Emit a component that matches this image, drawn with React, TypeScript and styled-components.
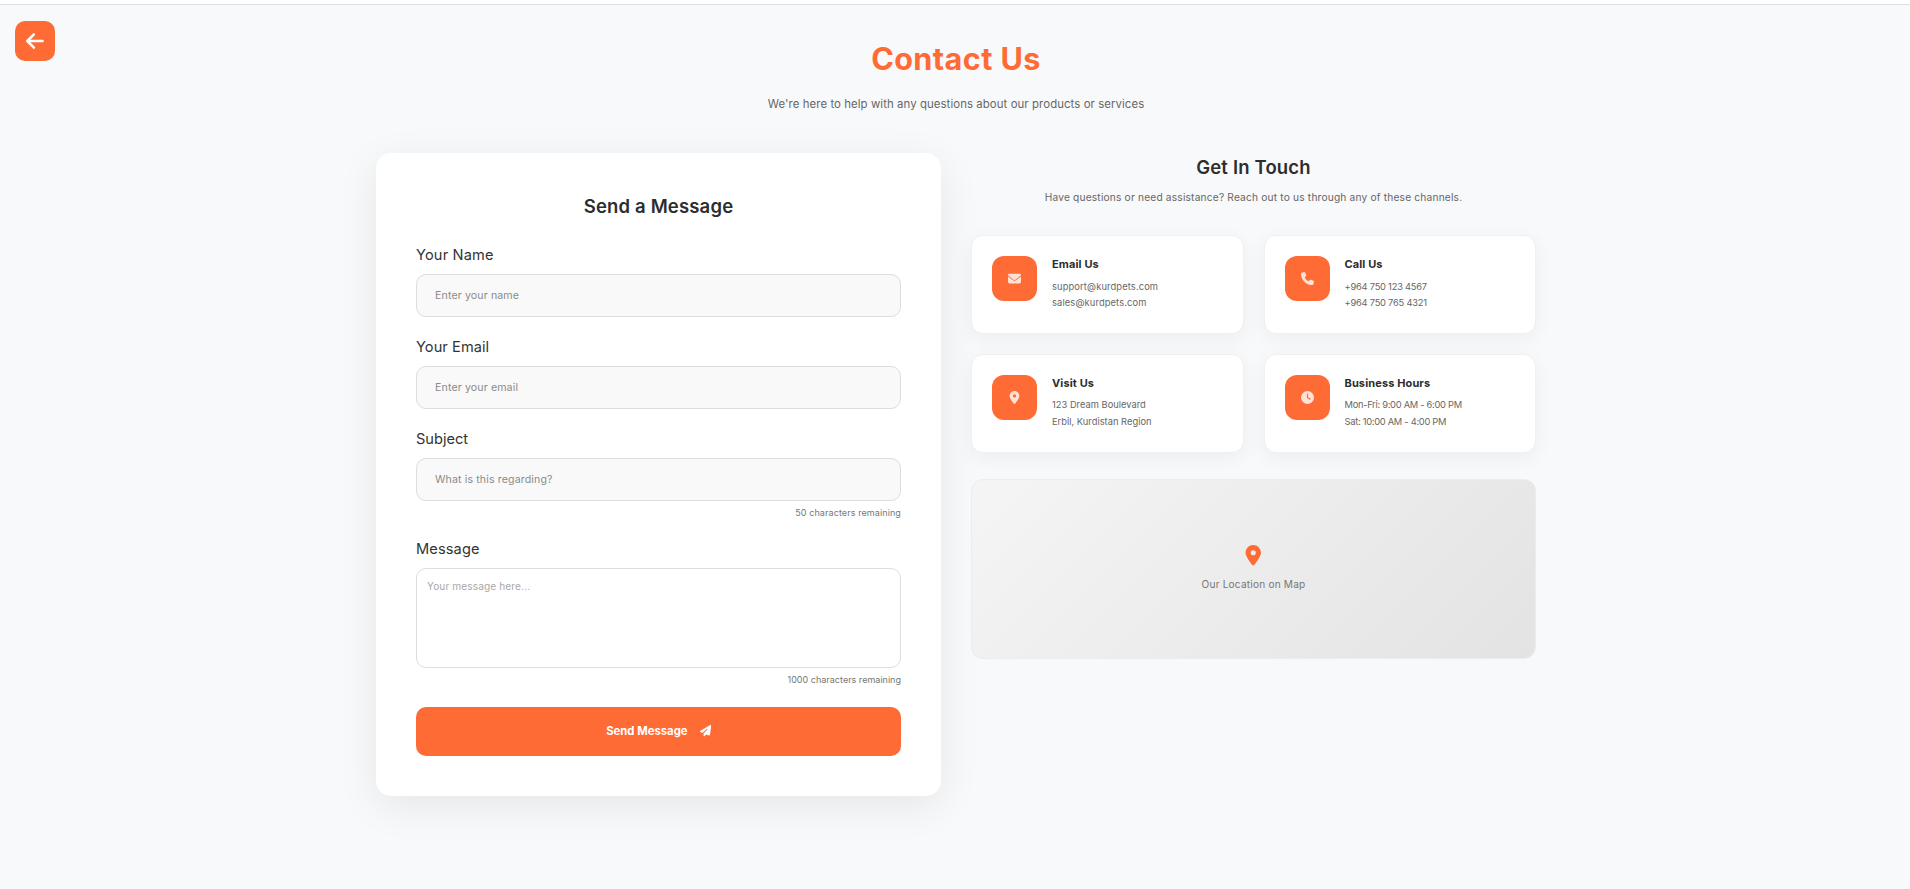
import React from 'react';
import styled, { createGlobalStyle } from 'styled-components';
import {
  FaClock,
  FaEnvelope,
  FaLocationDot,
  FaPaperPlane,
  FaPhone,
} from 'react-icons/fa6';

const accent = '#ff6b35';

const GlobalStyle = createGlobalStyle`
  *, *::before, *::after { box-sizing: border-box; }
  body {
    margin: 0;
    background: #f8f9fb;
    font-family: Inter, "Open Sans", sans-serif;
    color: #333;
    overflow: hidden;
  }
  h1, h2, h3, p { margin: 0; }
  input, textarea, button { font-family: inherit; }
`;

const Page = styled.div`
  position: relative;
  min-height: 889px;
  background: #f8f9fb;
`;

const TopBar = styled.div`
  height: 5px;
  background: #fff;
  border-bottom: 1px solid #dfe0e2;
`;

const BackButton = styled.button`
  position: absolute;
  top: 21px;
  left: 15px;
  width: 40px;
  height: 40px;
  display: flex;
  align-items: center;
  justify-content: center;
  padding: 0;
  border: 0;
  border-radius: 10px;
  background: ${accent};
  color: #fff;
`;

const Container = styled.main`
  width: 1160px;
  margin: 0 auto;
  position: relative;
  left: 1px;
`;

const Header = styled.header`
  padding-top: 34px;
  text-align: center;
`;

const PageTitle = styled.h1`
  font-size: 30.6px;
  line-height: 40px;
  font-weight: 700;
  letter-spacing: 0.42px;
  color: ${accent};
`;

const Lead = styled.p`
  margin-top: 15px;
  font-size: 11.4px;
  line-height: 20px;
  letter-spacing: 0.076px;
  color: #666;
`;

const Columns = styled.div`
  display: grid;
  grid-template-columns: 1fr 1fr;
  gap: 30px;
  align-items: start;
  margin-top: 39px;
`;

const FormCard = styled.form`
  padding: 40px;
  border-radius: 15px;
  background: #fff;
  box-shadow: 0 10px 40px rgba(0, 0, 0, 0.08);
`;

const SectionTitle = styled.h2<{ $lh: number }>`
  font-size: 18.5px;
  line-height: ${(p) => p.$lh}px;
  font-weight: 600;
  letter-spacing: 0.16px;
  text-align: center;
  color: #2d2d2d;
`;

const Field = styled.div<{ $gap: number }>`
  display: flex;
  flex-direction: column;
  margin-top: ${(p) => p.$gap}px;
`;

const Label = styled.label<{ $track: number }>`
  margin-bottom: 8px;
  font-size: 14.6px;
  line-height: 22px;
  letter-spacing: ${(p) => p.$track}px;
`;

const Input = styled.input`
  height: 43px;
  padding: 0 18px;
  border: 1px solid #ddd;
  border-radius: 10px;
  outline: 0;
  background: #f9f9f9;
  font-size: 10.6px;
  letter-spacing: 0.13px;
  &::placeholder {
    color: #8a8a8a;
    opacity: 1;
  }
`;

const TextArea = styled.textarea`
  height: 100px;
  padding: 9px 10px;
  border: 1px solid #ddd;
  border-radius: 10px;
  outline: 0;
  resize: none;
  background: #fff;
  font-size: 10.1px;
  line-height: 17px;
  letter-spacing: 0.12px;
  &::placeholder {
    color: #a9a9a9;
    opacity: 1;
  }
`;

const Counter = styled.span<{ $track: number }>`
  margin-top: 5px;
  font-size: 9px;
  line-height: 14px;
  letter-spacing: ${(p) => p.$track}px;
  text-align: right;
  color: #777;
`;

const SubmitButton = styled.button`
  display: flex;
  align-items: center;
  justify-content: center;
  gap: 12px;
  width: 100%;
  height: 49px;
  margin-top: 20px;
  padding-bottom: 2px;
  border: 0;
  border-radius: 10px;
  background: ${accent};
  color: #fff;
  font-size: 11.3px;
  font-weight: 700;
  letter-spacing: 0;
`;

const ContactColumn = styled.section`
  display: flex;
  flex-direction: column;
`;

const ContactLead = styled.p`
  margin-top: 7px;
  font-size: 10.2px;
  line-height: 18px;
  letter-spacing: 0.18px;
  text-align: center;
  color: #666;
`;

const InfoGrid = styled.div`
  display: grid;
  grid-template-columns: 1fr 1fr;
  grid-template-rows: 98.6px 99.4px;
  gap: 20px;
  margin-top: 29.4px;
`;

const InfoCard = styled.article`
  display: flex;
  align-items: flex-start;
  gap: 15px;
  padding: 20px;
  border: 1px solid #eff0f2;
  border-radius: 12px;
  background: #fff;
  box-shadow: 0 5px 20px rgba(0, 0, 0, 0.05);
`;

const IconTile = styled.span`
  display: flex;
  flex: none;
  align-items: center;
  justify-content: center;
  width: 45px;
  height: 45px;
  border-radius: 12px;
  background: ${accent};
  color: rgba(255, 255, 255, 0.8);
  font-size: 13px;
`;

const InfoTitle = styled.h3`
  margin-bottom: 6.4px;
  font-size: 11px;
  line-height: 16px;
  font-weight: 700;
  letter-spacing: 0.12px;
  color: #2d2d2d;
`;

const InfoLine = styled.p<{ $track: number }>`
  font-size: 9.3px;
  line-height: 16.4px;
  letter-spacing: ${(p) => p.$track}px;
  white-space: nowrap;
  color: #666;
`;

const MapPanel = styled.div`
  display: flex;
  flex-direction: column;
  align-items: center;
  justify-content: center;
  gap: 10px;
  height: 180px;
  margin-top: 25.2px;
  padding-top: 1px;
  border: 1px solid #ebecee;
  border-radius: 12px;
  background: linear-gradient(135deg, #f5f5f5, #e3e3e3);
  color: #777;
  font-size: 10.1px;
  line-height: 17px;
  letter-spacing: 0.2px;
  svg {
    color: ${accent};
    font-size: 20.5px;
  }
`;

const contacts = [
  { title: 'Email Us', icon: FaEnvelope, track: 0.14, lines: ['support@kurdpets.com', 'sales@kurdpets.com'] },
  { title: 'Call Us', icon: FaPhone, track: -0.22, lines: ['+964 750 123 4567', '+964 750 765 4321'] },
  { title: 'Visit Us', icon: FaLocationDot, track: 0.02, lines: ['123 Dream Boulevard', 'Erbil, Kurdistan Region'] },
  { title: 'Business Hours', icon: FaClock, track: -0.27, lines: ['Mon-Fri: 9:00 AM - 6:00 PM', 'Sat: 10:00 AM - 4:00 PM'] },
];

function BackArrow() {
  return (
    <svg
      width="20"
      height="20"
      viewBox="0 0 20 20"
      fill="none"
      stroke="currentColor"
      strokeWidth="2.5"
      strokeLinecap="round"
      strokeLinejoin="round"
    >
      <path d="M17.6 10H2.6M8.9 3.3 2.3 10l6.6 6.7" />
    </svg>
  );
}

export default function App() {
  return (
    <Page>
      <GlobalStyle />
      <TopBar />
      <BackButton type="button" aria-label="Back">
        <BackArrow />
      </BackButton>
      <Container>
        <Header>
          <PageTitle>Contact Us</PageTitle>
          <Lead>We're here to help with any questions about our products or services</Lead>
        </Header>
        <Columns>
          <FormCard>
            <SectionTitle $lh={27}>Send a Message</SectionTitle>
            <Field $gap={24}>
              <Label $track={0.16} htmlFor="name">Your Name</Label>
              <Input id="name" placeholder="Enter your name" />
            </Field>
            <Field $gap={19}>
              <Label $track={0.06} htmlFor="email">Your Email</Label>
              <Input id="email" placeholder="Enter your email" />
            </Field>
            <Field $gap={19}>
              <Label $track={0} htmlFor="subject">Subject</Label>
              <Input id="subject" placeholder="What is this regarding?" />
              <Counter $track={0.1}>50 characters remaining</Counter>
            </Field>
            <Field $gap={18}>
              <Label $track={0.12} htmlFor="message">Message</Label>
              <TextArea id="message" placeholder="Your message here..." />
              <Counter $track={0.02}>1000 characters remaining</Counter>
            </Field>
            <SubmitButton type="button">
              Send Message
              <FaPaperPlane />
            </SubmitButton>
          </FormCard>
          <ContactColumn>
            <SectionTitle $lh={28}>Get In Touch</SectionTitle>
            <ContactLead>
              Have questions or need assistance? Reach out to us through any of these channels.
            </ContactLead>
            <InfoGrid>
              {contacts.map(({ title, icon: Icon, track, lines }) => (
                <InfoCard key={title}>
                  <IconTile>
                    <Icon />
                  </IconTile>
                  <div>
                    <InfoTitle>{title}</InfoTitle>
                    {lines.map((line) => (
                      <InfoLine key={line} $track={track}>{line}</InfoLine>
                    ))}
                  </div>
                </InfoCard>
              ))}
            </InfoGrid>
            <MapPanel>
              <FaLocationDot />
              <span>Our Location on Map</span>
            </MapPanel>
          </ContactColumn>
        </Columns>
      </Container>
    </Page>
  );
}
